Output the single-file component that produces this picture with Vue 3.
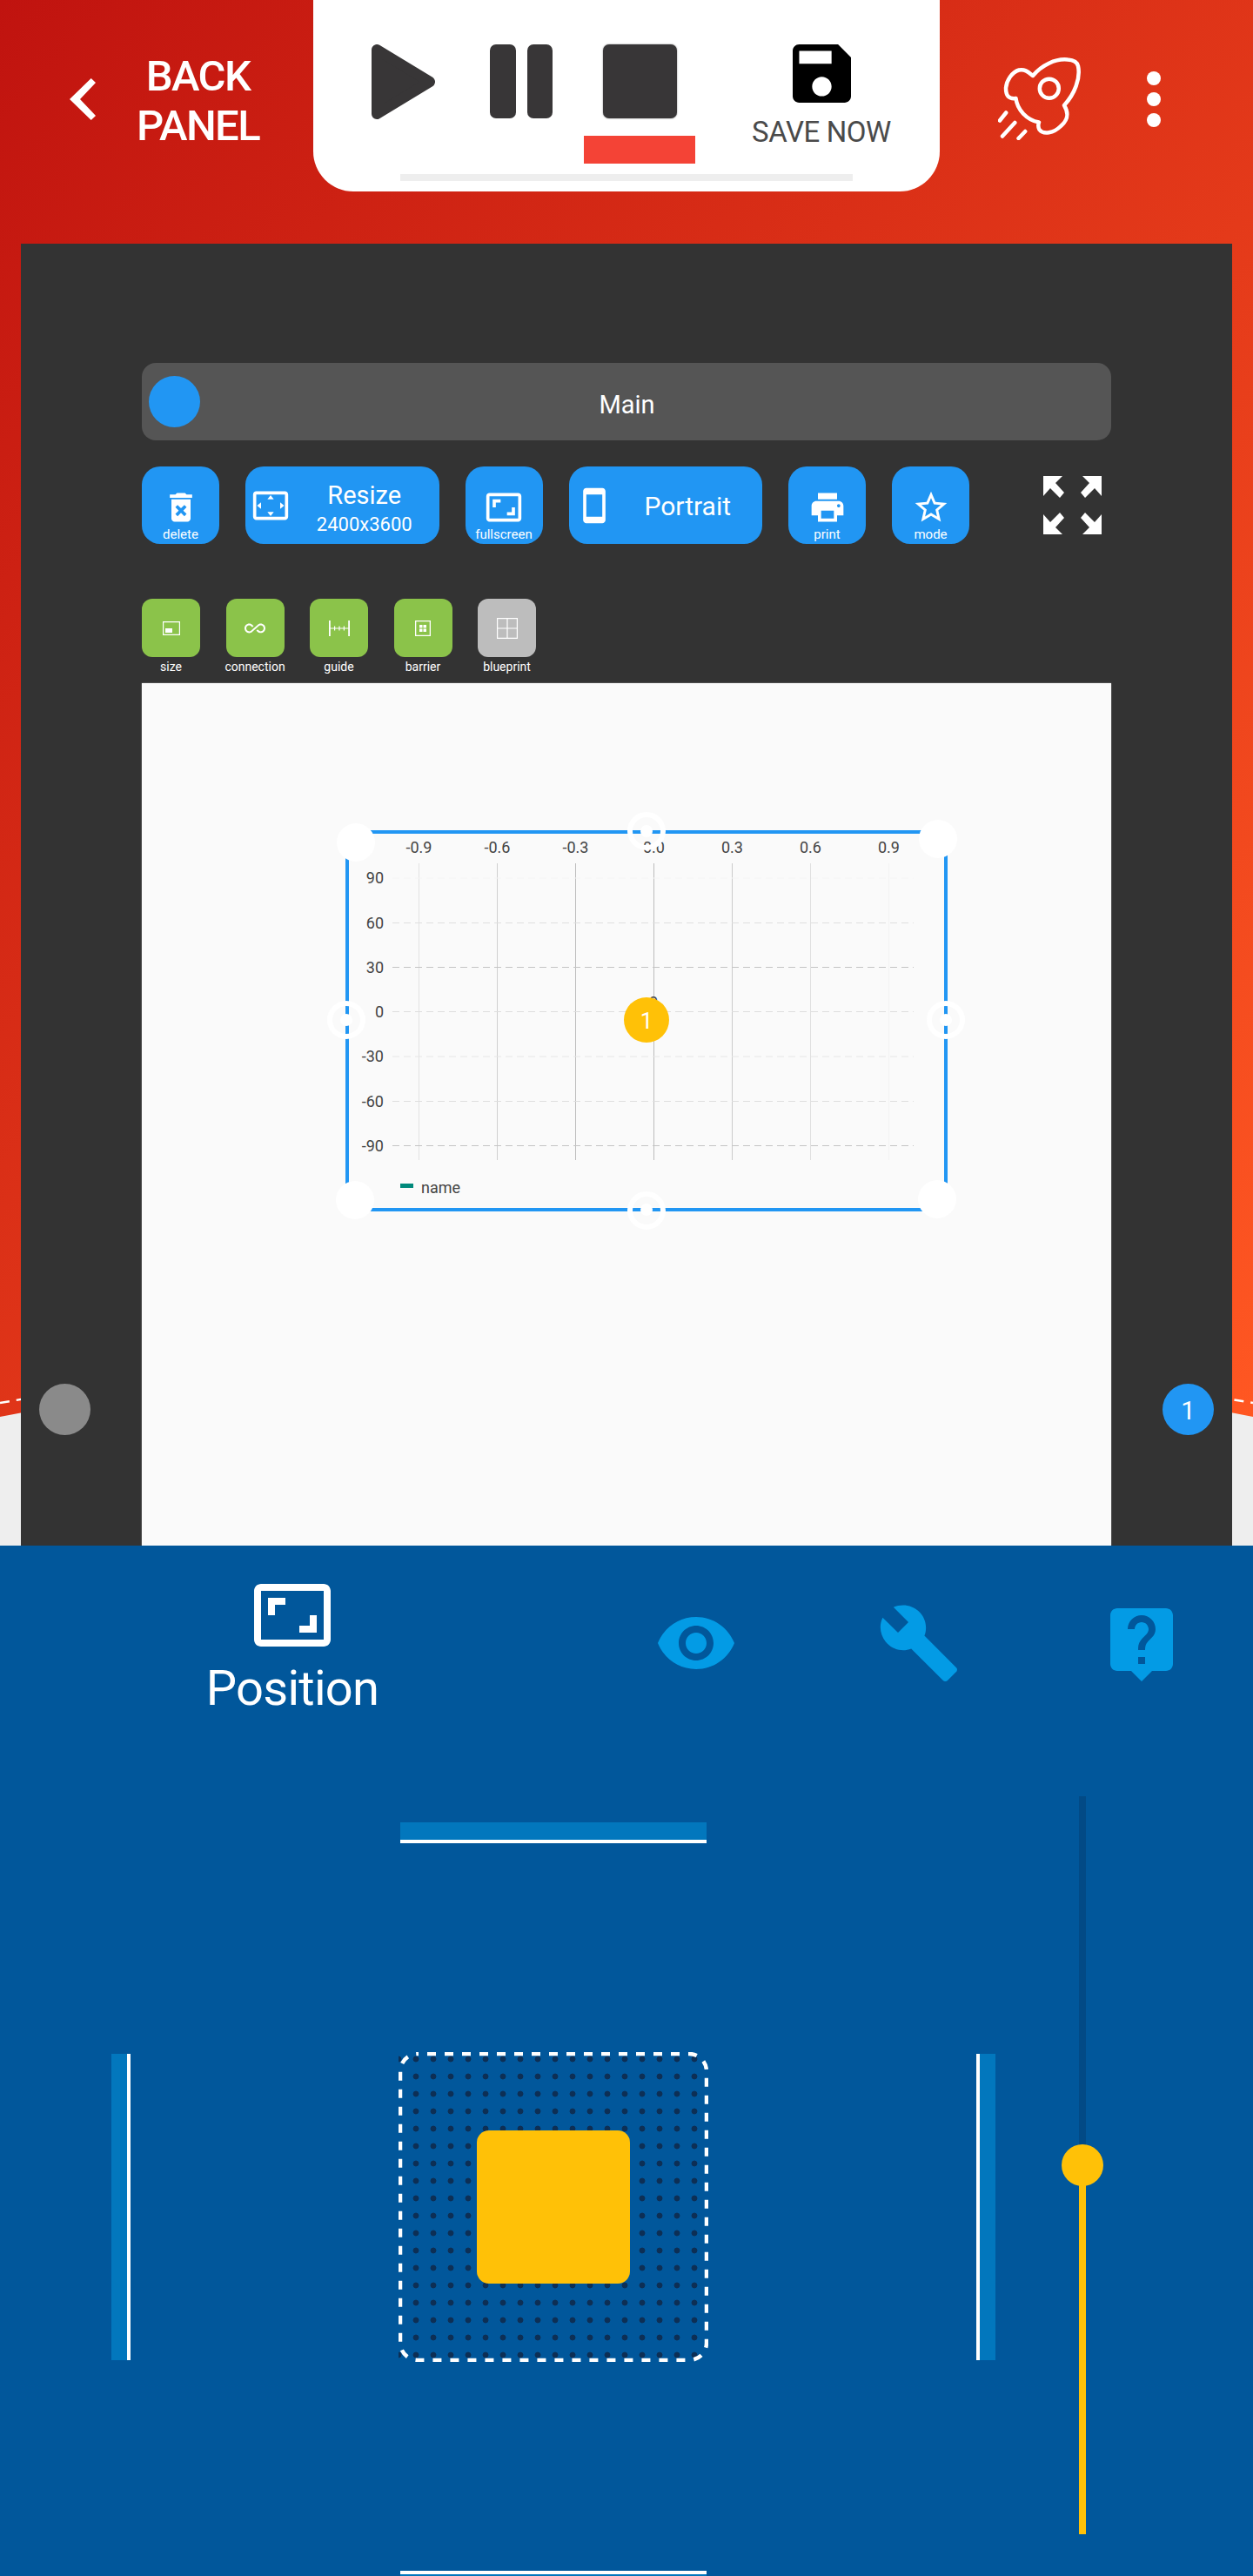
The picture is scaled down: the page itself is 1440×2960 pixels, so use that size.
<script setup>
const xTicks = [
  { label: '-0.9', x: 481.5, color: '#e2e2e2' },
  { label: '-0.6', x: 571.5, color: '#cfcfcf' },
  { label: '-0.3', x: 661.5, color: '#bdbdbd' },
  { label: '0.0', x: 751.5, color: '#bcbcbc' },
  { label: '0.3', x: 841.5, color: '#cbcbcb' },
  { label: '0.6', x: 931.5, color: '#e0e0e0' },
  { label: '0.9', x: 1021.5, color: '#f3f3f3' },
];

const yTicks = [
  { label: '90', y: 1009, color: '#f4f4f4' },
  { label: '60', y: 1060.5, color: '#dedede' },
  { label: '30', y: 1111.5, color: '#c4c4c4' },
  { label: '0', y: 1162.5, color: '#dedede' },
  { label: '-30', y: 1214, color: '#e6e6e6' },
  { label: '-60', y: 1265.5, color: '#dedede' },
  { label: '-90', y: 1316.5, color: '#c4c4c4' },
];

const greenTools = [
  { label: 'size', kind: 'size' },
  { label: 'connection', kind: 'connection' },
  { label: 'guide', kind: 'guide' },
  { label: 'barrier', kind: 'barrier' },
  { label: 'blueprint', kind: 'blueprint' },
];

const edgeHandles = ['top', 'left', 'right', 'bottom'];
const cornerHandles = ['tl', 'tr', 'bl', 'br'];
</script>

<template>
  <div class="page">
    <section class="stage">
      <svg class="backdrop" viewBox="0 0 1440 1776" width="1440" height="1776">
        <defs>
          <linearGradient id="redFade" x1="0" y1="0" x2="1" y2="1">
            <stop offset="0" stop-color="#c0130f" />
            <stop offset="1" stop-color="#ff5722" />
          </linearGradient>
        </defs>
        <path d="M0 0H1440V1628Q720 1484 0 1628Z" fill="url(#redFade)" />
        <path d="M0 1612Q720 1490 1440 1612" fill="none" stroke="#fff" stroke-width="2.5" stroke-dasharray="11 8" />
      </svg>

      <header class="topBar">
        <div class="backLink">
          <svg class="chevron" viewBox="0 0 30 48" width="30" height="48">
            <polygon points="0,24 24.7,0 30,5 12,24 30,43 24.7,48" fill="#fff" />
          </svg>
          <div class="backText">BACK<br>PANEL</div>
        </div>

        <div class="player">
          <div class="playerRow">
            <svg class="playIcon" viewBox="0 0 73 86" width="73" height="86">
              <path d="M6 6V80L67 43Z" fill="#383637" stroke="#383637" stroke-width="12" stroke-linejoin="round" />
            </svg>
            <div class="pauseIcon"><span /><span /></div>
            <div class="stopCol">
              <div class="stopIcon" />
              <div class="stopMark" />
            </div>
            <div class="saveCol">
              <svg viewBox="3 3 18 18" width="67" height="67">
                <path d="M17 3H5c-1.11 0-2 .9-2 2v14c0 1.1.89 2 2 2h14c1.1 0 2-.9 2-2V7l-4-4zm-5 16c-1.66 0-3-1.34-3-3s1.34-3 3-3 3 1.34 3 3-1.34 3-3 3zm3-10H5V5h10v4z" fill="#000" />
              </svg>
              <div class="saveLabel">SAVE NOW</div>
            </div>
          </div>
          <div class="playerTrack" />
        </div>

        <div class="topActions">
          <svg class="rocket" viewBox="0 0 95 95" width="95" height="95" fill="none" stroke="#fff" stroke-width="4.5" stroke-linecap="round" stroke-linejoin="round">
            <path d="M40 21C50 9 66 1 80 2.500C87 3 91 5 92 10C95 24 88 42 76 55C82 65 80 72 72 79C64 87 52 89 47.500 83C46 80 46 77 47 74.500C33 72 22 60 20.500 47C12 48 9 44 9 35C10 26 16 17 24 14.500C31 13 35 17 40 21Z" />
            <ellipse cx="58.800" cy="35.700" rx="11" ry="11" />
            <path d="M9.200 63.500L2 72.500M19.300 75L5 90.500M31.200 85L23.500 93" />
          </svg>
          <div class="moreDots"><span /><span /><span /></div>
        </div>
      </header>

      <main class="workspace">
        <span class="sideDot sideDotGrey" />
        <span class="sideDot sideDotBlue">1</span>

        <div class="titleBar">
          <span class="titleKnob" />
          <span class="titleText">Main</span>
        </div>

        <div class="toolRow">
          <button type="button" class="toolBtn toolSquare">
            <svg viewBox="0 0 24 24" width="44" height="44"><path d="M6 19c0 1.100.9 2 2 2h8c1.100 0 2-.9 2-2V7H6v12zm2.460-7.120l1.410-1.410L12 12.590l2.120-2.120 1.410 1.410L13.410 14l2.120 2.120-1.410 1.410L12 15.410l-2.120 2.120-1.410-1.410L10.590 14l-2.130-2.120zM15.500 4l-1-1h-5l-1 1H5v2h14V4z" /></svg>
            <span class="toolCaption">delete</span>
          </button>
          <button type="button" class="toolBtn toolWide">
            <svg viewBox="0 0 24 24" width="44" height="44"><path d="M12.010 5.500L10 8h4l-1.990-2.500zM18 10v4l2.500-1.990L18 10zM6 10l-2.500 2.010L6 14v-4zm8 6h-4l2.010 2.500L14 16zm7-13H3c-1.100 0-2 .9-2 2v14c0 1.100.9 2 2 2h18c1.100 0 2-.9 2-2V5c0-1.100-.9-2-2-2zm0 16.010H3V4.990h18v14.020z" /></svg>
            <span class="wideText">
              <span class="wideTitle">Resize</span>
              <span class="wideSub">2400x3600</span>
            </span>
          </button>
          <button type="button" class="toolBtn toolSquare">
            <svg viewBox="0 0 24 24" width="44" height="44"><path d="M19 12h-2v3h-3v2h5v-5zM7 9h3V7H5v5h2V9zm14-6H3c-1.100 0-2 .9-2 2v14c0 1.100.9 2 2 2h18c1.100 0 2-.9 2-2V5c0-1.100-.9-2-2-2zm0 16.010H3V4.990h18v14.020z" /></svg>
            <span class="toolCaption">fullscreen</span>
          </button>
          <button type="button" class="toolBtn toolWide">
            <svg viewBox="0 0 24 24" width="44" height="44"><path d="M17 1.010L7 1c-1.100 0-1.990.9-1.990 2v18c0 1.100.89 2 1.990 2h10c1.100 0 2-.9 2-2V3c0-1.100-.9-1.990-2-1.990zM17 19H7V5h10v14z" /></svg>
            <span class="wideText"><span class="wideSingle">Portrait</span></span>
          </button>
          <button type="button" class="toolBtn toolSquare">
            <svg viewBox="0 0 24 24" width="44" height="44"><path d="M19 8H5c-1.660 0-3 1.340-3 3v6h4v4h12v-4h4v-6c0-1.660-1.340-3-3-3zm-3 11H8v-5h8v5zm3-7c-.55 0-1-.45-1-1s.45-1 1-1 1 .45 1 1-.45 1-1 1zm-1-9H6v4h12V3z" /></svg>
            <span class="toolCaption">print</span>
          </button>
          <button type="button" class="toolBtn toolSquare">
            <svg viewBox="0 0 24 24" width="44" height="44"><path d="M22 9.240l-7.190-.62L12 2 9.190 8.630 2 9.240l5.460 4.730L5.820 21 12 17.270 18.180 21l-1.630-7.030L22 9.240zM12 15.400l-3.760 2.270 1-4.280-3.320-2.880 4.380-.38L12 6.100l1.710 4.040 4.380.38-3.320 2.880 1 4.280L12 15.400z" /></svg>
            <span class="toolCaption">mode</span>
          </button>
          <svg class="expandIcon" viewBox="0 0 67 67" width="67" height="67" fill="#fff">
            <path d="M0 0H22L14 8L24 19L19 25L8 14L0 23Z" />
            <path d="M67 0H45L53 8L43 19L48 25L59 14L67 23Z" />
            <path d="M0 67H22L14 59L24 48L19 42L8 53L0 44Z" />
            <path d="M67 67H45L53 59L43 48L48 42L59 53L67 44Z" />
          </svg>
        </div>

        <div class="greenRow">
          <div v-for="tool in greenTools" :key="tool.label" class="greenTool">
            <div class="greenBox" :class="{ greenBoxGrey: tool.kind === 'blueprint' }">
              <svg viewBox="0 0 24 24" width="24" height="24" fill="#fff">
                <path v-if="tool.kind === 'size'" fill-rule="evenodd" d="M2 4h20v16H2zM3.200 5.200v13.600h17.600V5.200zM5 12h8v5H5z" />
                <path v-else-if="tool.kind === 'connection'" d="M18.600 6.620c-1.440 0-2.800.56-3.770 1.530L12 10.660 10.480 12h.01L7.800 14.390c-.64.64-1.490.99-2.400.99-1.870 0-3.390-1.510-3.390-3.380S3.530 8.620 5.400 8.620c.91 0 1.760.35 2.440 1.030l1.130 1 1.510-1.340L9.220 8.200C8.200 7.180 6.840 6.620 5.400 6.620 2.420 6.620 0 9.040 0 12s2.420 5.380 5.400 5.380c1.440 0 2.800-.56 3.770-1.530l2.830-2.500.01.01L13.520 12h-.01l2.690-2.390c.64-.64 1.490-.99 2.400-.99 1.870 0 3.390 1.510 3.390 3.380s-1.520 3.380-3.390 3.380c-.9 0-1.760-.35-2.440-1.030l-1.140-1.010-1.510 1.340 1.270 1.120c1.020 1.010 2.370 1.570 3.820 1.570 2.980 0 5.400-2.410 5.400-5.380s-2.420-5.370-5.400-5.370z" />
                <path v-else-if="tool.kind === 'guide'" d="M0 3h1.800v18H0zM22.200 3H24v18h-1.800zM1.800 11.400h20.400v1.200H1.800zM6 9.500h1.200v5H6zM11.400 9.500h1.200v5h-1.200zM16.800 9.500H18v5h-1.200z" />
                <path v-else-if="tool.kind === 'barrier'" fill-rule="evenodd" d="M3 3h18v18H3zM4.300 4.300v15.400h15.400V4.300zM8 8h3.500v3.500H8zM12.500 8H16v3.500h-3.500zM8 12.500h3.500V16H8zM12.500 12.500H16V16h-3.500z" />
                <path v-else fill-rule="evenodd" d="M0 0h24v24H0zM1.200 1.200v10.200h10.200V1.200zm11.400 0v10.200h10.200V1.200zM1.200 12.600v10.200h10.200V12.600zm11.400 0v10.200h10.200V12.600z" />
              </svg>
            </div>
            <span class="greenCaption">{{ tool.label }}</span>
          </div>
        </div>

        <div class="canvas">
          <svg class="chart" viewBox="163 785 1114 991" width="1114" height="991">
            <line v-for="tick in xTicks" :key="tick.label" :x1="tick.x" :x2="tick.x" y1="992" y2="1333" :stroke="tick.color" stroke-width="1" />
            <line v-for="tick in yTicks" :key="tick.label" x1="451" x2="1050" :y1="tick.y" :y2="tick.y" :stroke="tick.color" stroke-width="1" stroke-dasharray="8 5" />
            <text v-for="tick in xTicks" :key="tick.label" class="axisText" :x="tick.x" y="980" text-anchor="middle">{{ tick.label }}</text>
            <text v-for="tick in yTicks" :key="tick.label" class="axisText" x="441" :y="tick.y + 6" text-anchor="end">{{ tick.label }}</text>
            <text class="axisText" x="751" y="1158" text-anchor="middle">0</text>
            <rect x="460" y="1360" width="15" height="5" fill="#00897b" />
            <text class="axisText" x="484" y="1371">name</text>
          </svg>

          <div class="selection">
            <span v-for="pos in cornerHandles" :key="pos" class="handle" :class="`corner-${pos}`" />
            <span v-for="pos in edgeHandles" :key="pos" class="ring" :class="`edge-${pos}`" />
            <span class="valueBadge">1</span>
          </div>
        </div>
      </main>
    </section>

    <section class="controls">
      <nav class="tabs">
        <div class="tabActive">
          <svg viewBox="0 0 24 24" width="96" height="96" fill="#fff"><path d="M19 12h-2v3h-3v2h5v-5zM7 9h3V7H5v5h2V9zm14-6H3c-1.100 0-2 .9-2 2v14c0 1.100.9 2 2 2h18c1.100 0 2-.9 2-2V5c0-1.100-.9-2-2-2zm0 16.010H3V4.990h18v14.020z" /></svg>
          <span class="tabLabel">Position</span>
        </div>
        <svg class="tabIcon tabEye" viewBox="0 0 24 24" width="96" height="96"><path d="M12 4.500C7 4.500 2.730 7.610 1 12c1.730 4.390 6 7.500 11 7.500s9.270-3.110 11-7.500c-1.730-4.390-6-7.500-11-7.500zM12 17c-2.760 0-5-2.240-5-5s2.240-5 5-5 5 2.240 5 5-2.240 5-5 5zm0-8c-1.660 0-3 1.340-3 3s1.340 3 3 3 3-1.340 3-3-1.340-3-3-3z" /></svg>
        <svg class="tabIcon" viewBox="0 0 24 24" width="96" height="96"><path d="M22.700 19l-9.100-9.100c.9-2.300.4-5-1.500-6.900-2-2-5-2.400-7.400-1.300L9 6 6 9 1.600 4.700C.4 7.100.9 10.100 2.900 12.100c1.900 1.900 4.600 2.400 6.900 1.500l9.100 9.100c.4.4 1 .4 1.400 0l2.300-2.300c.5-.4.5-1.100.1-1.400z" /></svg>
        <svg class="tabIcon" viewBox="0 0 24 24" width="96" height="96"><path d="M19 2H5c-1.110 0-2 .9-2 2v14c0 1.100.89 2 2 2h4l3 3 3-3h4c1.100 0 2-.9 2-2V4c0-1.100-.9-2-2-2zm-6 16h-2v-2h2v2zm2.070-7.750l-.9.92C13.450 11.900 13 12.500 13 14h-2v-.5c0-1.100.45-2.100 1.170-2.830l1.240-1.260c.37-.36.59-.86.59-1.410 0-1.100-.9-2-2-2s-2 .9-2 2H8c0-2.210 1.790-4 4-4s4 1.790 4 4c0 .88-.36 1.680-.93 2.250z" /></svg>
      </nav>

      <div class="padRow">
        <div class="sideBar sideBarLeft" />
        <div class="padCol">
          <div class="edgeBar edgeBarTop" />
          <div class="dotBox">
            <svg class="dashFrame" viewBox="0 0 356 356" width="356" height="356">
              <rect x="2" y="2" width="352" height="352" rx="20" fill="none" stroke="#fff" stroke-width="4.5" stroke-dasharray="10 10" stroke-dashoffset="-11" />
            </svg>
            <div class="yellowSquare" />
          </div>
          <div class="edgeBar edgeBarBottom" />
        </div>
        <div class="sideBar sideBarRight" />
        <div class="zoomSlider">
          <div class="sliderDark" />
          <div class="sliderFill" />
          <span class="sliderThumb" />
        </div>
      </div>
    </section>
  </div>
</template>

<style>
html,
body {
  margin: 0;
  background: #01579b;
}
</style>

<style scoped>
.page {
  width: 1440px;
  height: 2960px;
  overflow: hidden;
  font-family: Roboto, "Liberation Sans", sans-serif;
}

.stage {
  position: relative;
  height: 1776px;
  background: #eeeeee;
}

.backdrop {
  position: absolute;
  left: 0;
  top: 0;
}

.topBar {
  position: relative;
  display: flex;
  height: 220px;
}

.backLink {
  display: flex;
  width: 360px;
  box-sizing: border-box;
  padding: 59px 0 0 80px;
}

.chevron {
  margin-top: 31px;
}

.backText {
  margin-left: 47px;
  color: #fff;
  font-size: 49px;
  font-weight: 500;
  letter-spacing: -1.6px;
  line-height: 57px;
  text-align: center;
}

.player {
  width: 720px;
  height: 220px;
  background: #fff;
  border-radius: 0 0 46px 46px;
}

.playerRow {
  display: flex;
  align-items: flex-start;
  height: 188px;
  box-sizing: border-box;
  padding: 51px 0 0 67px;
}

.pauseIcon {
  display: flex;
  gap: 13px;
  margin-left: 63px;
}

.pauseIcon span {
  width: 29.500px;
  height: 85px;
  border-radius: 7px;
  background: #383637;
}

.stopCol {
  display: flex;
  flex-direction: column;
  align-items: center;
  width: 128px;
  margin-left: 36px;
}

.stopIcon {
  width: 85px;
  height: 85px;
  border-radius: 7px;
  background: #383637;
  box-shadow: 0 0 2px rgba(0, 0, 0, 0.5);
}

.stopMark {
  width: 128px;
  height: 32px;
  margin-top: 20px;
  background: #f44336;
}

.saveCol {
  display: flex;
  flex-direction: column;
  align-items: center;
  width: 160px;
  margin-left: 65px;
}

.saveLabel {
  margin-top: 16px;
  color: #4a4a4a;
  font-size: 33px;
  letter-spacing: -0.4px;
  line-height: 36px;
  white-space: nowrap;
}

.playerTrack {
  width: 520px;
  height: 8px;
  margin: 12px 0 0 100px;
  background: #eeeeee;
}

.topActions {
  display: flex;
  align-items: flex-start;
  padding: 66px 0 0 67px;
}

.moreDots {
  display: flex;
  flex-direction: column;
  gap: 8px;
  margin: 16px 0 0 76px;
}

.moreDots span {
  width: 16px;
  height: 16px;
  border-radius: 50%;
  background: #fff;
}

.workspace {
  position: relative;
  box-sizing: border-box;
  height: 1496px;
  margin: 60px 24px 0;
  padding: 137px 139px 0;
  background: #333333;
}

.sideDot {
  position: absolute;
  top: 1310px;
  width: 59px;
  height: 59px;
  border-radius: 50%;
  color: #fff;
  font-size: 29px;
  line-height: 62px;
  text-align: center;
}

.sideDotGrey {
  left: 20.500px;
  background: #8a8a8a;
}

.sideDotBlue {
  left: 1312px;
  background: #2196f3;
}

.titleBar {
  position: relative;
  display: flex;
  align-items: center;
  justify-content: center;
  height: 89px;
  border-radius: 16px;
  background: #555555;
}

.titleKnob {
  position: absolute;
  left: 8px;
  top: 15px;
  width: 59px;
  height: 59px;
  border-radius: 50%;
  background: #2196f3;
}

.titleText {
  margin-left: 1px;
  padding-top: 6px;
  color: #fff;
  font-size: 29px;
}

.toolRow {
  display: flex;
  gap: 30px;
  height: 89px;
  margin-top: 30px;
}

.toolBtn {
  position: relative;
  display: flex;
  box-sizing: border-box;
  height: 89px;
  padding: 0;
  border: 0;
  border-radius: 21px;
  background: #2196f3;
  color: #fff;
  font-family: inherit;
}

.toolBtn svg {
  fill: #fff;
}

.toolSquare {
  flex-direction: column;
  align-items: center;
  width: 89px;
  padding-top: 25px;
}

.toolCaption {
  margin-top: 0;
  font-size: 15px;
  line-height: 18px;
}

.toolWide {
  align-items: center;
  width: 222.500px;
  padding-left: 7px;
}

.wideText {
  display: flex;
  flex: 1;
  flex-direction: column;
  align-items: center;
  padding-top: 6px;
}

.wideTitle {
  font-size: 29px;
  line-height: 34px;
}

.wideSub {
  margin-top: 4px;
  font-size: 22px;
  line-height: 26px;
}

.wideSingle {
  margin-top: -4px;
  font-size: 30px;
}

.expandIcon {
  margin: 11px 0 0 55px;
}

.greenRow {
  display: flex;
  gap: 29.500px;
  height: 97px;
  margin-top: 63px;
}

.greenTool {
  display: flex;
  flex-direction: column;
  align-items: center;
  width: 67px;
}

.greenBox {
  display: flex;
  align-items: center;
  justify-content: center;
  width: 67px;
  height: 67px;
  border-radius: 12px;
  background: #8bc34a;
}

.greenBoxGrey {
  background: #bdbdbd;
}

.greenCaption {
  margin-top: 2px;
  color: #fff;
  font-size: 14px;
  line-height: 18px;
  white-space: nowrap;
}

.canvas {
  position: relative;
  box-sizing: border-box;
  height: 991px;
  background: #fafafa;
  box-shadow: 0 0 1.500px #999;
}

.chart {
  position: absolute;
  left: 0;
  top: 0;
}

.axisText {
  fill: #444444;
  font-family: Roboto, "Liberation Sans", sans-serif;
  font-size: 18px;
}

.selection {
  position: absolute;
  left: 234px;
  top: 169px;
  box-sizing: border-box;
  width: 692px;
  height: 437.500px;
  border: 4px solid #2196f3;
}

.handle,
.ring {
  position: absolute;
  box-sizing: border-box;
  width: 44px;
  height: 44px;
  border-radius: 50%;
}

.handle {
  background: #fff;
}

.ring {
  border: 6.500px solid #fff;
}

.ring::after {
  content: "";
  position: absolute;
  left: 8.500px;
  top: 8.500px;
  width: 14px;
  height: 14px;
  border-radius: 50%;
  background: #fff;
}

.corner-tl { left: -14.500px; top: -12px; }
.corner-tr { right: -14.500px; top: -16px; }
.corner-bl { left: -15px; bottom: -13px; }
.corner-br { right: -14px; bottom: -12.500px; }
.edge-top { left: 320px; top: -25px; }
.edge-left { left: -25px; top: 192px; }
.edge-right { right: -24px; top: 192px; }
.edge-bottom { left: 320px; bottom: -25px; }

.valueBadge {
  position: absolute;
  left: 316px;
  top: 188px;
  width: 52px;
  height: 52px;
  border-radius: 50%;
  background: #ffc107;
  color: #fff;
  font-size: 26px;
  line-height: 54px;
  text-align: center;
}

.controls {
  position: relative;
  height: 1184px;
  background: #01579b;
}

.tabs {
  display: flex;
  align-items: flex-start;
  height: 318px;
  box-sizing: border-box;
  padding: 32px 0 0 216px;
}

.tabActive {
  display: flex;
  flex-direction: column;
  align-items: center;
  width: 240px;
}

.tabLabel {
  margin-top: 4px;
  color: #fff;
  font-size: 56px;
  letter-spacing: -0.7px;
  line-height: 64px;
}

.tabIcon {
  margin: 32px 0 0 160px;
  fill: #039be5;
}

.tabEye {
  margin-left: 296px;
}

.padRow {
  display: flex;
  align-items: flex-start;
  padding-left: 128px;
}

.sideBar {
  width: 22px;
  height: 352px;
  margin-top: 266px;
  box-sizing: border-box;
  background: #0277bd;
}

.sideBarLeft {
  border-right: 4px solid #fff;
}

.sideBarRight {
  border-left: 4px solid #fff;
}

.padCol {
  display: flex;
  flex-direction: column;
  align-items: center;
  width: 356px;
  margin: 0 308px;
}

.edgeBar {
  width: 352px;
  height: 24px;
  box-sizing: border-box;
  background: #0277bd;
}

.edgeBarTop {
  border-bottom: 4px solid #fff;
}

.edgeBarBottom {
  border-top: 4px solid #fff;
}

.dotBox {
  position: relative;
  display: flex;
  align-items: center;
  justify-content: center;
  width: 356px;
  height: 356px;
  margin: 240px 0;
  background-image: radial-gradient(circle, #0d2f55 3px, transparent 3.800px);
  background-position: 10px -2px;
  background-size: 20px 20px;
}

.dashFrame {
  position: absolute;
  left: 0;
  top: 0;
}

.yellowSquare {
  position: relative;
  width: 176px;
  height: 176px;
  border-radius: 14px;
  background: #ffc107;
}

.zoomSlider {
  position: relative;
  display: flex;
  flex-direction: column;
  align-items: center;
  width: 48px;
  margin: -30px 0 0 76px;
}

.sliderDark {
  width: 8px;
  height: 424px;
  background: #024a86;
}

.sliderFill {
  width: 8px;
  height: 424px;
  background: #ffc107;
}

.sliderThumb {
  position: absolute;
  left: 0;
  top: 400px;
  width: 48px;
  height: 48px;
  border-radius: 50%;
  background: #ffc107;
}
</style>
